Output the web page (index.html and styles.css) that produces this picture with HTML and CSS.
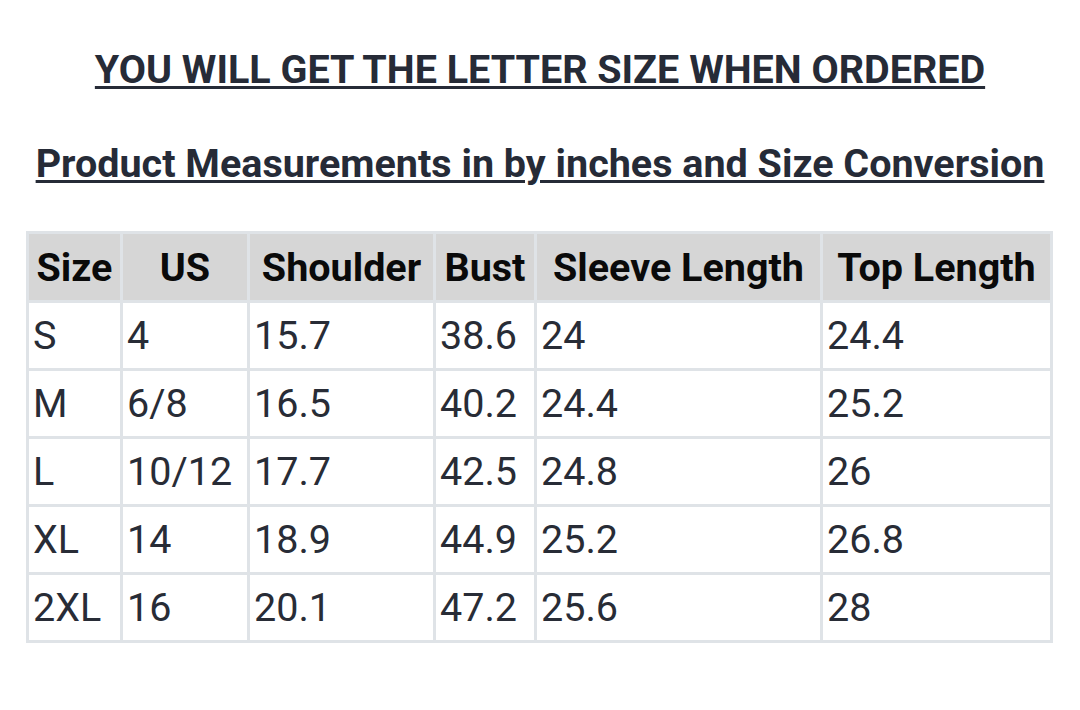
FILE: index.html
```html
<!DOCTYPE html>
<html>
<head>
<meta charset="utf-8">
<link rel="stylesheet" href="styles.css">
</head>
<body>
<div class="page">
  <h1 class="title">YOU WILL GET THE LETTER SIZE WHEN ORDERED</h1>
  <h2 class="subtitle">Product Measurements in by inches and Size Conversion</h2>
  <table class="sizes">
    <colgroup>
      <col class="c1"><col class="c2"><col class="c3"><col class="c4"><col class="c5"><col class="c6">
    </colgroup>
    <thead>
      <tr>
        <th>Size</th><th>US</th><th>Shoulder</th><th>Bust</th><th>Sleeve Length</th><th>Top Length</th>
      </tr>
    </thead>
    <tbody>
      <tr><td>S</td><td>4</td><td>15.7</td><td>38.6</td><td>24</td><td>24.4</td></tr>
      <tr><td>M</td><td>6/8</td><td>16.5</td><td>40.2</td><td>24.4</td><td>25.2</td></tr>
      <tr><td>L</td><td>10/12</td><td>17.7</td><td>42.5</td><td>24.8</td><td>26</td></tr>
      <tr><td>XL</td><td>14</td><td>18.9</td><td>44.9</td><td>25.2</td><td>26.8</td></tr>
      <tr><td>2XL</td><td>16</td><td>20.1</td><td>47.2</td><td>25.6</td><td>28</td></tr>
    </tbody>
  </table>
</div>
</body>
</html>
```
FILE: styles.css
```css
html, body {
  margin: 0;
  padding: 0;
  background: #ffffff;
}
.page {
  font-family: Roboto, "Liberation Sans", sans-serif;
  padding-top: 46px;
}
.title {
  margin: 0;
  font-size: 39.5px;
  line-height: 48px;
  font-weight: 700;
  text-align: center;
  color: #262b37;
  text-decoration: underline;
  text-decoration-thickness: 3px;
  text-underline-offset: 3px;
}
.subtitle {
  margin: 46px 0 0 0;
  font-size: 39.5px;
  line-height: 48px;
  font-weight: 700;
  text-align: center;
  color: #262b37;
  text-decoration: underline;
  text-decoration-thickness: 3px;
  text-underline-offset: 3px;
}
.sizes {
  margin: 43px 0 0 26px;
  border-collapse: separate;
  border-spacing: 3px;
  background: #dfe3e7;
  table-layout: fixed;
  width: 1027px;
}
.c1 { width: 91px; }
.c2 { width: 124px; }
.c3 { width: 183px; }
.c4 { width: 98px; }
.c5 { width: 283px; }
.c6 { width: 227px; }
.sizes th {
  height: 66px;
  padding: 0;
  background: #d6d6d6;
  color: #0a0a0a;
  font-size: 39.5px;
  font-weight: 700;
  text-align: center;
  white-space: nowrap;
}
.sizes td {
  height: 65px;
  padding: 0 0 0 4px;
  background: #ffffff;
  color: #282c36;
  font-size: 39.5px;
  font-weight: 400;
  text-align: left;
  white-space: nowrap;
}
```
